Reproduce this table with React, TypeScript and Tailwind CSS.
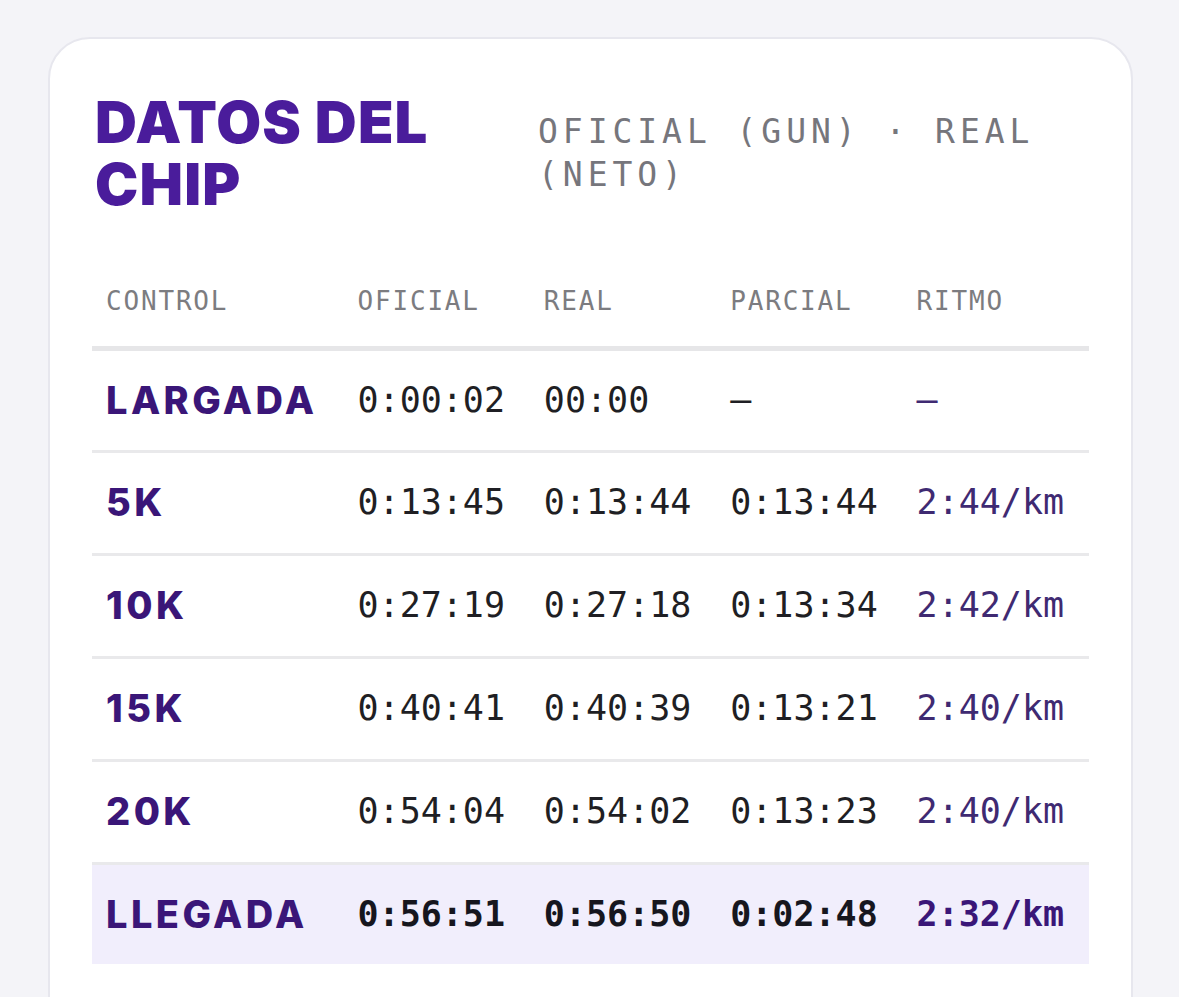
const rows = [
  { label: "LARGADA", oficial: "0:00:02", real: "00:00", parcial: "–", ritmo: "–" },
  { label: "5K", oficial: "0:13:45", real: "0:13:44", parcial: "0:13:44", ritmo: "2:44/km" },
  { label: "10K", oficial: "0:27:19", real: "0:27:18", parcial: "0:13:34", ritmo: "2:42/km" },
  { label: "15K", oficial: "0:40:41", real: "0:40:39", parcial: "0:13:21", ritmo: "2:40/km" },
  { label: "20K", oficial: "0:54:04", real: "0:54:02", parcial: "0:13:23", ritmo: "2:40/km" },
];

const mono = "font-['DejaVu_Sans_Mono',monospace]";
const sans = "font-['Inter',sans-serif]";

export default function App() {
  return (
    <div className="h-[997px] bg-[#f4f4f8] pt-[37px] pl-[48px] pr-[46px] overflow-hidden">
      <div className="h-[1040px] rounded-[42px] border-2 border-[#e7e7ee] bg-white px-[42px] pt-[52px]">
        <div className="flex items-baseline">
          <h1
            className={`${sans} w-[446px] shrink-0 pl-[3px] text-[58px] font-black leading-[62px] tracking-[0.02em] text-[#4a1c9b]`}
          >
            DATOS DEL
            <br />
            CHIP
          </h1>
          <p className={`${mono} text-[33px] leading-[43px] tracking-[0.15em] text-[#76767c]`}>
            OFICIAL (GUN) · REAL
            <br />
            (NETO)
          </p>
        </div>

        <table className="mt-[42px] w-full border-collapse text-left">
          <thead>
            <tr className="border-b-[5px] border-[#e6e6e8]">
              {["CONTROL", "OFICIAL", "REAL", "PARCIAL", "RITMO"].map((h, i) => (
                <th
                  key={h}
                  className={`${mono} h-[91px] px-[14px] text-[26px] font-normal tracking-[0.07em] text-[#7c7c80] ${
                    i === 0 ? "w-[251px]" : "w-[186px]"
                  }`}
                >
                  {h}
                </th>
              ))}
            </tr>
          </thead>
          <tbody>
            {rows.map((r) => (
              <tr key={r.label} className="border-b-[3px] border-[#e9e9eb]">
                <td className={`${sans} h-[103px] px-[14px] text-[38px] font-extrabold tracking-[0.09em] text-[#3a1678]`}>
                  {r.label}
                </td>
                <td className={`${mono} px-[14px] text-[35px] text-[#1f1f24]`}>{r.oficial}</td>
                <td className={`${mono} px-[14px] text-[35px] text-[#1f1f24]`}>{r.real}</td>
                <td className={`${mono} px-[14px] text-[35px] text-[#1f1f24]`}>{r.parcial}</td>
                <td className={`${mono} px-[14px] text-[35px] text-[#3f2a72]`}>{r.ritmo}</td>
              </tr>
            ))}
            <tr className="bg-[#f1eefc]">
              <td className={`${sans} h-[101px] px-[14px] text-[38px] font-extrabold tracking-[0.09em] text-[#3a1678]`}>
                LLEGADA
              </td>
              <td className={`${mono} px-[14px] text-[35px] font-bold text-[#16161e]`}>0:56:51</td>
              <td className={`${mono} px-[14px] text-[35px] font-bold text-[#16161e]`}>0:56:50</td>
              <td className={`${mono} px-[14px] text-[35px] font-bold text-[#16161e]`}>0:02:48</td>
              <td className={`${mono} px-[14px] text-[35px] font-bold text-[#3a1678]`}>2:32/km</td>
            </tr>
          </tbody>
        </table>
      </div>
    </div>
  );
}
